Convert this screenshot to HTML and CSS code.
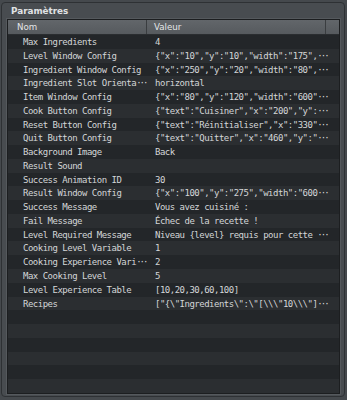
FILE: index.html
```html
<!DOCTYPE html>
<html lang="fr">
<head>
    <meta charset="UTF-8">
    <meta name="viewport" content="width=device-width, initial-scale=1.0">
    <title>Paramètres</title>
    <link rel="stylesheet" href="styles.css">
</head>
<body>
    <div class="panel">
        <div class="panel-title">Paramètres</div>
        <div class="tree">
            <div class="tree-header">
                <div class="head-name">Nom</div>
                <div class="head-value">Valeur</div>
                <div class="head-rest"></div>
            </div>
            <div class="tree-body">
                <div class="row"><div class="cell-name">Max Ingredients</div><div class="cell-value">4</div></div>
                <div class="row"><div class="cell-name">Level Window Config</div><div class="cell-value">{"x":"10","y":"10","width":"175",<span class="more">···</span></div></div>
                <div class="row"><div class="cell-name">Ingredient Window Config</div><div class="cell-value">{"x":"250","y":"20","width":"80",<span class="more">···</span></div></div>
                <div class="row"><div class="cell-name">Ingredient Slot Orienta<span class="more">···</span></div><div class="cell-value">horizontal</div></div>
                <div class="row"><div class="cell-name">Item Window Config</div><div class="cell-value">{"x":"80","y":"120","width":"600"<span class="more">···</span></div></div>
                <div class="row"><div class="cell-name">Cook Button Config</div><div class="cell-value">{"text":"Cuisiner","x":"200","y":<span class="more">···</span></div></div>
                <div class="row"><div class="cell-name">Reset Button Config</div><div class="cell-value">{"text":"Réinitialiser","x":"330"<span class="more">···</span></div></div>
                <div class="row"><div class="cell-name">Quit Button Config</div><div class="cell-value">{"text":"Quitter","x":"460","y":"<span class="more">···</span></div></div>
                <div class="row"><div class="cell-name">Background Image</div><div class="cell-value">Back</div></div>
                <div class="row"><div class="cell-name">Result Sound</div><div class="cell-value"></div></div>
                <div class="row"><div class="cell-name">Success Animation ID</div><div class="cell-value">30</div></div>
                <div class="row"><div class="cell-name">Result Window Config</div><div class="cell-value">{"x":"100","y":"275","width":"600<span class="more">···</span></div></div>
                <div class="row"><div class="cell-name">Success Message</div><div class="cell-value">Vous avez cuisiné :</div></div>
                <div class="row"><div class="cell-name">Fail Message</div><div class="cell-value">Échec de la recette !</div></div>
                <div class="row"><div class="cell-name">Level Required Message</div><div class="cell-value">Niveau {level} requis pour cette <span class="more">···</span></div></div>
                <div class="row"><div class="cell-name">Cooking Level Variable</div><div class="cell-value">1</div></div>
                <div class="row"><div class="cell-name">Cooking Experience Vari<span class="more">···</span></div><div class="cell-value">2</div></div>
                <div class="row"><div class="cell-name">Max Cooking Level</div><div class="cell-value">5</div></div>
                <div class="row"><div class="cell-name">Level Experience Table</div><div class="cell-value">[10,20,30,60,100]</div></div>
                <div class="row"><div class="cell-name">Recipes</div><div class="cell-value">["{\"Ingredients\":\"[\\\"10\\\"]<span class="more">···</span></div></div>
                <div class="row"></div>
                <div class="row"></div>
                <div class="row"></div>
                <div class="row"></div>
                <div class="row"></div>
                <div class="row"></div>
                <div class="row"></div>
            </div>
        </div>
    </div>
</body>
</html>
```

FILE: styles.css
```css
body, html {
    margin: 0;
    width: 347px;
    height: 400px;
    background-color: #45494d;
    overflow: hidden;
}
.panel {
    box-sizing: border-box;
    margin: 2px 0 0 1px;
    width: 344px;
    height: 395px;
    border: 1px solid #2e3134;
    border-radius: 4px;
    background-color: #484c50;
    padding: 0 4px 2px 5px;
    display: flex;
    flex-direction: column;
}
.panel-title {
    height: 16px;
    padding-left: 4px;
    font-family: "DejaVu Sans", sans-serif;
    font-weight: bold;
    font-size: 8.8px;
    line-height: 16px;
    color: #e0e2e4;
}
.tree {
    flex: 1;
    border: 1px solid #1c1e20;
    box-shadow: 0 0 0 1px #55595d;
    background-color: #232629;
    display: flex;
    flex-direction: column;
    overflow: hidden;
}
.tree-header {
    display: flex;
    height: 14px;
    background: linear-gradient(#62666a, #565a5e);
    border-bottom: 1px solid #2a2d30;
    font-family: "DejaVu Sans", sans-serif;
    font-size: 8.7px;
    line-height: 14px;
    color: #e4e6e8;
}
.head-name {
    width: 139px;
    padding-left: 9px;
    box-sizing: border-box;
    border-right: 1px solid #3a3d40;
    flex: none;
}
.head-value {
    width: 179px;
    padding-left: 7px;
    box-sizing: border-box;
    border-right: 1px solid #3a3d40;
    flex: none;
}
.head-rest {
    flex: 1;
}
.tree-body {
    flex: 1;
    overflow: hidden;
}
.row {
    display: flex;
    box-sizing: border-box;
    height: 13.77px;
    padding-top: 1px;
    line-height: 12.77px;
    font-family: "DejaVu Sans Mono", monospace;
    font-size: 9px;
    letter-spacing: -0.5px;
    color: #d4d6d8;
    background-color: #232629;
}
.row:nth-child(even) {
    background-color: #2b2e31;
}
.cell-name {
    width: 140px;
    padding: 0 0 0 15px;
    box-sizing: border-box;
    flex: none;
    white-space: nowrap;
    overflow: hidden;
}
.cell-value {
    width: 184px;
    padding: 0 0 0 7px;
    box-sizing: border-box;
    flex: none;
    white-space: nowrap;
    overflow: hidden;
}
.more {
    letter-spacing: -2px;
}
```
